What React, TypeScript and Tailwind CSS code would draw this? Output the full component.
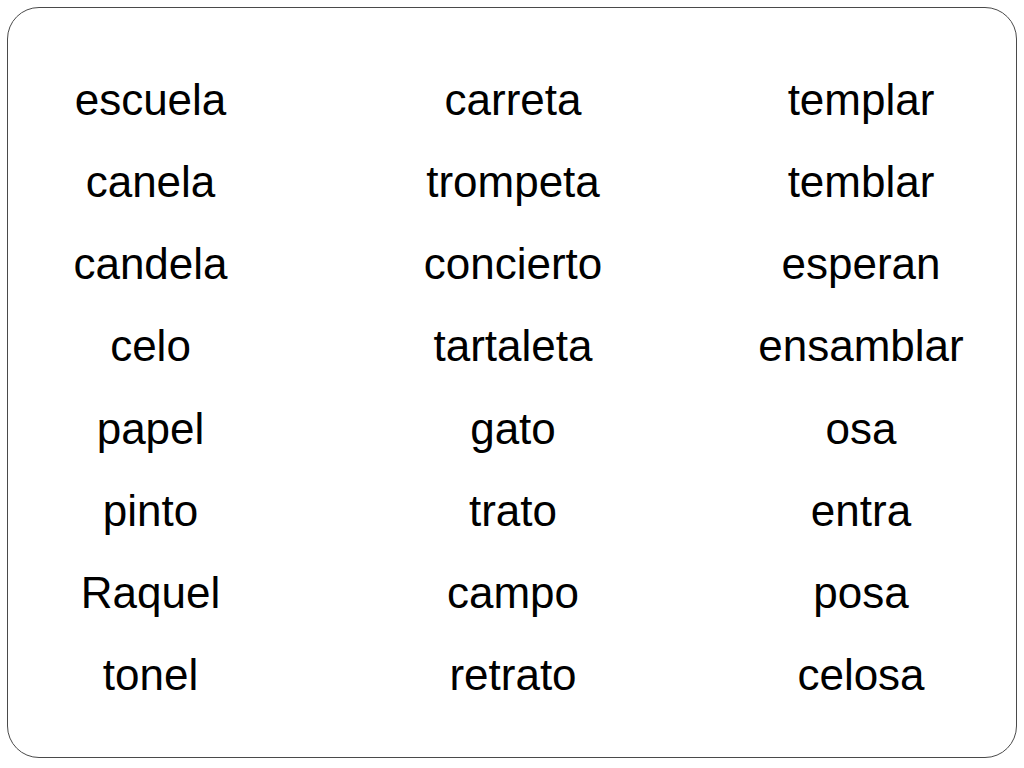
const columns: string[][] = [
  ["escuela", "canela", "candela", "celo", "papel", "pinto", "Raquel", "tonel"],
  ["carreta", "trompeta", "concierto", "tartaleta", "gato", "trato", "campo", "retrato"],
  ["templar", "temblar", "esperan", "ensamblar", "osa", "entra", "posa", "celosa"],
]

export default function App() {
  return (
    <div className="w-[1024px] h-[768px] bg-white overflow-hidden">
      <div className="m-[7px] w-[1010px] h-[751px] rounded-[32px] border border-[#4a4a4a]">
        <div
          className="grid grid-cols-[285px_440px_256px] pt-[51px] text-[44px] leading-[82.14px] text-black"
          style={{ fontFamily: '"Liberation Sans", Arial, sans-serif' }}
        >
          {columns.map((col, i) => (
            <div key={i} className="flex flex-col items-center">
              {col.map((w) => (
                <span key={w}>{w}</span>
              ))}
            </div>
          ))}
        </div>
      </div>
    </div>
  )
}
